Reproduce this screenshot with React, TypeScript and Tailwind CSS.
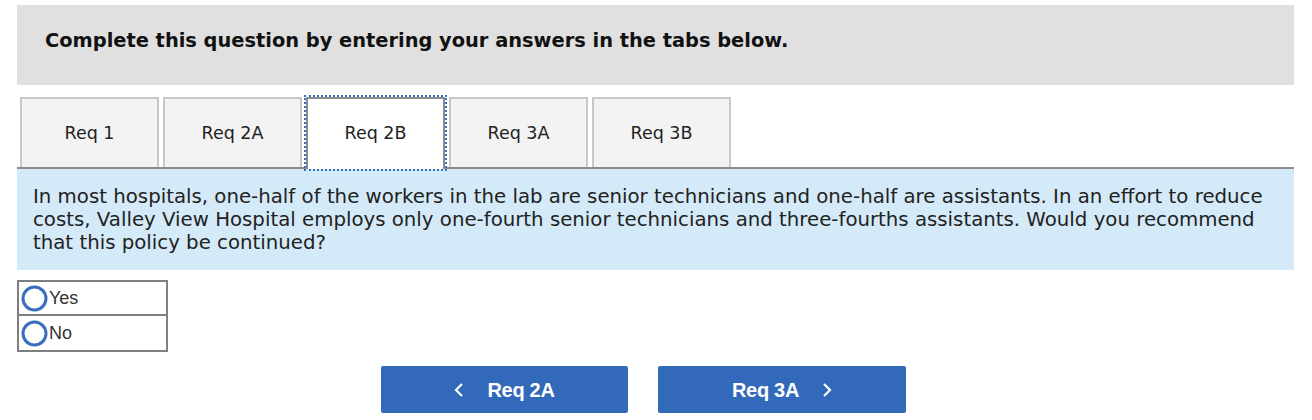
import React from "react";

const tabs = ["Req 1", "Req 2A", "Req 2B", "Req 3A", "Req 3B"];

function Radio({ label, top }: { label: string; top?: boolean }) {
  return (
    <div
      className={`flex h-[34px] items-center pl-[2px] ${top ? "border-b-2 border-[#7f7f7f]" : ""}`}
    >
      <svg width="27" height="27" viewBox="0 0 27 27">
        <circle cx="13.5" cy="13.5" r="11.5" fill="white" stroke="#3a6dbd" strokeWidth="3" />
      </svg>
      <span className="ml-[1px] text-[18px] text-[#333]" style={{ fontFamily: '"Liberation Sans", Arial, sans-serif' }}>
        {label}
      </span>
    </div>
  );
}

function Chevron({ dir }: { dir: "left" | "right" }) {
  return (
    <svg width="10" height="16" viewBox="0 0 10 16">
      <path
        d={dir === "left" ? "M8 2 L2 8 L8 14" : "M2 2 L8 8 L2 14"}
        fill="none"
        stroke="white"
        strokeWidth="2.2"
      />
    </svg>
  );
}

export default function App() {
  return (
    <div className="w-[1312px] h-[420px] bg-white overflow-hidden" style={{ fontFamily: '"DejaVu Sans", Verdana, sans-serif' }}>
      <div className="ml-[17px] w-[1277px] pt-[5px]">
        <div className="h-[80px] bg-[#e0e0e0] pl-[28px] pt-[24px]">
          <h1 className="text-[19.4px] font-bold text-[#111] leading-[24px]">
            Complete this question by entering your answers in the tabs below.
          </h1>
        </div>

        <div className="mt-[12px] flex gap-[4px] pl-[3px] border-b-2 border-[#8c8c8c] h-[72px]">
          {tabs.map((t) =>
            t === "Req 2B" ? (
              <div
                key={t}
                className="relative z-10 w-[139px] h-[72px] bg-white border-2 border-b-0 border-[#8c8c8c] flex items-center justify-center text-[17.5px] text-[#222] outline-2 outline-dotted outline-[#3a6fc2] outline-offset-[0px]"
              >
                <span className="-mt-[2px]">{t}</span>
              </div>
            ) : (
              <div
                key={t}
                className="w-[139px] h-[70px] bg-[#f3f3f3] border-2 border-b-0 border-[#c8c8c8] flex items-center justify-center text-[17.5px] text-[#222]"
              >
                {t}
              </div>
            )
          )}
        </div>

        <div className="bg-[#d4eaf8] px-[16px] py-[16px] text-[19.75px] leading-[23px] text-[#222]">
          In most hospitals, one-half of the workers in the lab are senior technicians and one-half are assistants. In an effort to reduce costs, Valley View Hospital employs only one-fourth senior technicians and three-fourths assistants. Would you recommend that this policy be continued?
        </div>

        <div className="mt-[10px] w-[151px] border-2 border-[#7f7f7f]">
          <Radio label="Yes" top />
          <Radio label="No" />
        </div>

        <div className="mt-[14px] ml-[364px] flex gap-[30px]" style={{ fontFamily: '"Liberation Sans", Arial, sans-serif' }}>
          <button className="w-[247px] h-[47px] rounded-[2px] bg-[#3369ba] flex items-center justify-center gap-[23px] text-white text-[20px] font-bold">
            <Chevron dir="left" />
            <span className="tracking-[-0.3px]">Req 2A</span>
          </button>
          <button className="w-[248px] h-[47px] rounded-[2px] bg-[#3369ba] flex items-center justify-center gap-[23px] text-white text-[20px] font-bold">
            <span className="tracking-[-0.3px]">Req 3A</span>
            <Chevron dir="right" />
          </button>
        </div>
      </div>
    </div>
  );
}
